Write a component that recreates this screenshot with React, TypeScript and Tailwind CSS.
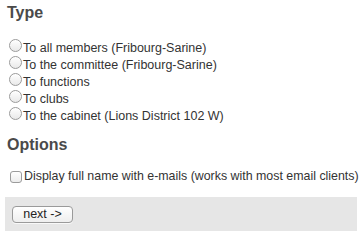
import React from "react";

const targets = [
  "To all members (Fribourg-Sarine)",
  "To the committee (Fribourg-Sarine)",
  "To functions",
  "To clubs",
  "To the cabinet (Lions District 102 W)",
];

function Radio() {
  return (
    <span className="inline-block w-[13px] h-[13px] shrink-0 rounded-full border border-[#9b9b9b] bg-gradient-to-b from-white to-[#e9e9e9] shadow-[inset_0_1px_0_#fff]" />
  );
}

function Checkbox() {
  return (
    <span className="inline-block w-[12px] h-[12px] shrink-0 rounded-[3px] border border-[#9b9b9b] bg-gradient-to-b from-white to-[#ececec]" />
  );
}

export default function App() {
  return (
    <div className="w-[362px] h-[235px] bg-white text-[#444] font-['Liberation_Sans',Arial,sans-serif] overflow-hidden">
      <div className="px-[7px]">
        <h2 className="pt-[3px] text-[16px] leading-[20px] font-bold text-[#4a4a4a]">
          Type
        </h2>
        <div className="flex flex-col pt-[17px]">
          {targets.map((t) => (
            <label key={t} className="flex items-center gap-[1px] h-[17px] text-[12.5px] text-[#333] whitespace-nowrap">
              <span className="pl-[2px]">
                <Radio />
              </span>
              {t}
            </label>
          ))}
        </div>
        <h2 className="pt-[10px] text-[16px] leading-[20px] font-bold text-[#4a4a4a]">
          Options
        </h2>
        <label className="flex items-center gap-[2px] pt-[14px] pl-[3px] text-[12.4px] leading-[15px] text-[#333] whitespace-nowrap">
          <Checkbox />
          Display full name with e-mails (works with most email clients)
        </label>
      </div>
      <div className="mx-[5px] mt-[13px] h-[34px] w-[352px] bg-[#e6e6e6] flex items-center pl-[7px]">
        <button className="h-[17px] w-[61px] rounded-[4px] border border-[#9a9a9a] bg-gradient-to-b from-white to-[#eeeeee] text-[12.5px] leading-[15px] text-[#222] shadow-[0_1px_0_#f8f8f8]">
          next -&gt;
        </button>
      </div>
    </div>
  );
}
